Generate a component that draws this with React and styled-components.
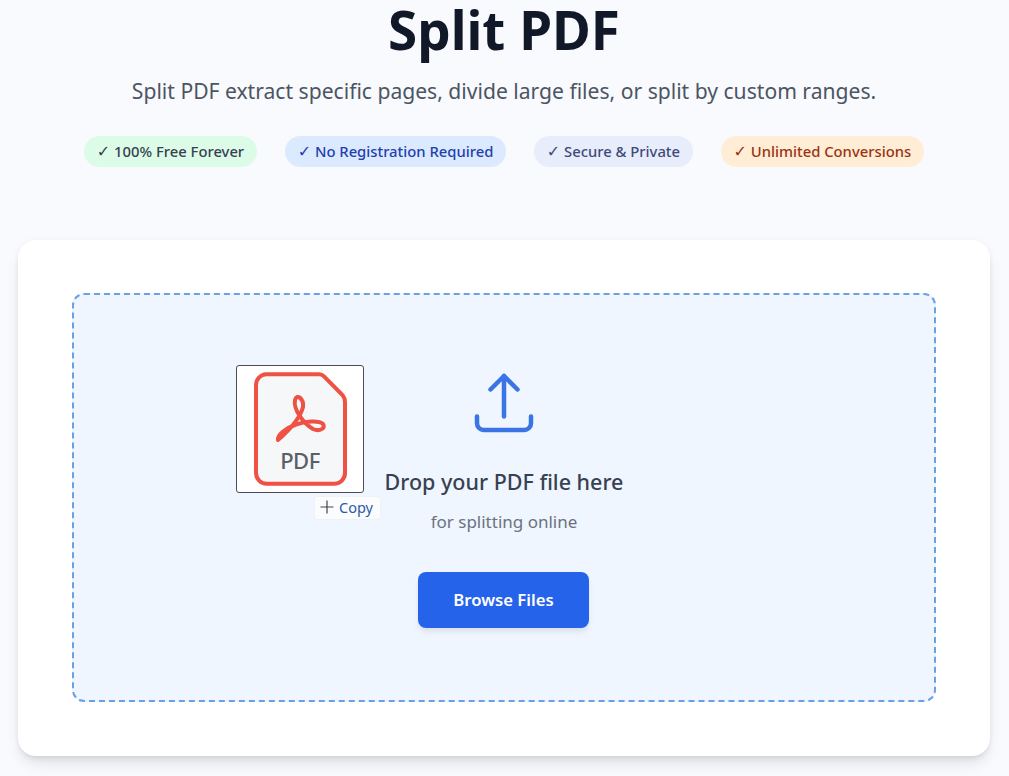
import styled, { createGlobalStyle } from "styled-components";

const GlobalStyle = createGlobalStyle`
  html, body {
    margin: 0;
    padding: 0;
    height: 776px;
    overflow: hidden;
    background: #f9fafd;
    font-family: "Noto Sans", "Open Sans", sans-serif;
  }
`;

const badges = [
  { text: "100% Free Forever", bg: "#dcfce7", color: "#374151" },
  { text: "No Registration Required", bg: "#dbeafe", color: "#1e40af" },
  { text: "Secure & Private", bg: "#e8edfb", color: "#3f4a7a" },
  { text: "Unlimited Conversions", bg: "#ffedd5", color: "#9a3412" },
];

export default function App() {
  return (
    <>
      <GlobalStyle />
      <Page>
        <Title>Split PDF</Title>
        <Subtitle>Split PDF extract specific pages, divide large files, or split by custom ranges.</Subtitle>
        <Badges>
          {badges.map((b) => (
            <Badge key={b.text} $bg={b.bg} $color={b.color}>
              <Check>✓</Check> {b.text}
            </Badge>
          ))}
        </Badges>
        <Card>
          <DropZone>
            <UploadIcon viewBox="0 0 24 24" fill="none" stroke="#3b74e4" strokeWidth="1.5" strokeLinecap="round" strokeLinejoin="round">
              <path d="M3 16.5v2.25A2.25 2.25 0 0 0 5.25 21h13.5A2.25 2.25 0 0 0 21 18.75V16.5" />
              <path d="M7.5 7.5 12 3l4.5 4.5" />
              <path d="M12 3v13.5" />
            </UploadIcon>
            <DropTitle>Drop your PDF file here</DropTitle>
            <DropHint>for splitting online</DropHint>
            <BrowseButton>Browse Files</BrowseButton>
            <DragGhost>
              <svg width="94" height="116" viewBox="0 0 94 116" fill="none">
                <path d="M13 3.300H66Q69 3.300 71 5.300L89.500 24Q92 27 92 31V102A10.700 10.700 0 0 1 81.300 112.700H13.700A10.700 10.700 0 0 1 3 102V14A10.700 10.700 0 0 1 13 3.300Z" fill="#f6f7f8" stroke="#ef5144" strokeWidth="4" />
                <path d="M25 69C33 62 47 48 50 36C51 28 44 22 42 29C40 38 50 52 60 58C67 61 73 57 70 53C66 49 52 50 42 54C33 57 24 64 25 69Z" stroke="#ef5144" strokeWidth="4" strokeLinejoin="round" />
              </svg>
              <PdfLabel>PDF</PdfLabel>
            </DragGhost>
            <CopyTag>
              <svg width="14" height="14" viewBox="0 0 14 14" stroke="#444" strokeWidth="1.200">
                <path d="M7 0.500V13.500M0.500 7H13.500" />
              </svg>
              Copy
            </CopyTag>
          </DropZone>
        </Card>
      </Page>
    </>
  );
}

const Page = styled.div`
  width: 1008px;
  display: flex;
  flex-direction: column;
  align-items: center;
`;

const Title = styled.h1`
  margin: 0;
  height: 60px;
  line-height: 60px;
  font-size: 53px;
  font-weight: 700;
  color: #111827;
  white-space: nowrap;
`;

const Subtitle = styled.p`
  margin: 15px 0 0;
  line-height: 32px;
  font-size: 21.100px;
  color: #4b5563;
  white-space: nowrap;
`;

const Badges = styled.div`
  margin-top: 29px;
  display: flex;
  gap: 27.500px;
`;

const Badge = styled.span`
  height: 31px;
  line-height: 31px;
  padding: 0 13px;
  border-radius: 16px;
  font-size: 14.800px;
  font-weight: 500;
  white-space: nowrap;
  background: ${(p) => p.$bg};
  color: ${(p) => p.$color};
`;

const Check = styled.span`
  font-family: "DejaVu Sans", sans-serif;
  font-size: 16px;
  font-weight: 400;
  line-height: 1;
`;

const Card = styled.section`
  margin-top: 73px;
  width: 972px;
  height: 516px;
  box-sizing: border-box;
  padding: 53px 54px 54px;
  background: #fff;
  border-radius: 18px;
  box-shadow: 0 10px 15px -3px rgba(0, 0, 0, 0.1), 0 4px 6px -2px rgba(0, 0, 0, 0.07), 0 0 6px rgba(0, 0, 0, 0.04);
`;

const DropZone = styled.div`
  position: relative;
  height: 100%;
  box-sizing: border-box;
  padding-top: 72px;
  display: flex;
  flex-direction: column;
  align-items: center;
  background: #eff6ff;
  border: 2px dashed #6aa0e6;
  border-radius: 12px;
`;

const UploadIcon = styled.svg`
  width: 72px;
  height: 72px;
  margin-right: 1px;
`;

const DropTitle = styled.h3`
  margin: 27px 0 0;
  line-height: 32px;
  font-size: 21.500px;
  font-weight: 500;
  color: #374151;
`;

const DropHint = styled.p`
  margin: 12px 0 0;
  line-height: 24px;
  font-size: 17px;
  color: #6b7280;
`;

const BrowseButton = styled.button`
  margin: 38px 1px 0 0;
  width: 171px;
  height: 56px;
  padding: 0 0 2px;
  border: 0;
  border-radius: 8px;
  background: #2563eb;
  color: #fff;
  font-family: inherit;
  font-size: 16.700px;
  font-weight: 600;
  box-shadow: 0 4px 6px -1px rgba(0, 0, 0, 0.1);
`;

const DragGhost = styled.div`
  position: absolute;
  left: 162px;
  top: 70px;
  width: 126px;
  height: 126px;
  display: flex;
  align-items: center;
  justify-content: center;
  background: #fff;
  border: 1px solid #4b4b55;
  border-radius: 3px;
`;

const PdfLabel = styled.span`
  position: absolute;
  left: 0;
  right: 0;
  top: 79px;
  text-align: center;
  font-size: 22px;
  font-weight: 500;
  letter-spacing: -0.5px;
  line-height: 30px;
  color: #5a5f68;
`;

const CopyTag = styled.div`
  position: absolute;
  left: 240px;
  top: 201px;
  height: 24px;
  box-sizing: border-box;
  padding: 0 7px 2px 5px;
  display: flex;
  align-items: center;
  gap: 5px;
  background: #fbfcfe;
  border: 1px solid #eef1f5;
  border-radius: 3px;
  font-size: 14.500px;
  color: #2b5aa8;
`;
